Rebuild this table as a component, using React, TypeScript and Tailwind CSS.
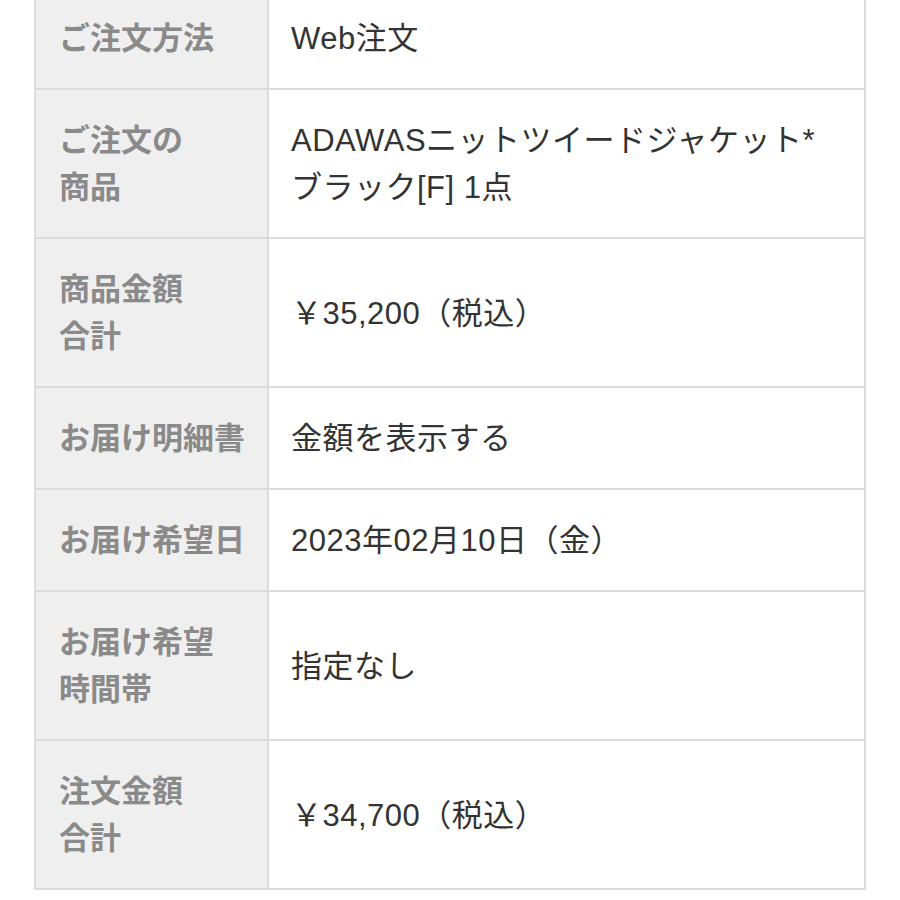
const rows: { label: React.ReactNode; value: React.ReactNode }[] = [
  { label: "ご注文方法", value: "Web注文" },
  {
    label: (
      <>
        ご注文の
        <br />
        商品
      </>
    ),
    value: (
      <>
        ADAWASニットツイードジャケット*
        <br />
        ブラック[F] 1点
      </>
    ),
  },
  {
    label: (
      <>
        商品金額
        <br />
        合計
      </>
    ),
    value: "￥35,200（税込）",
  },
  { label: "お届け明細書", value: "金額を表示する" },
  { label: "お届け希望日", value: "2023年02月10日（金）" },
  {
    label: (
      <>
        お届け希望
        <br />
        時間帯
      </>
    ),
    value: "指定なし",
  },
  {
    label: (
      <>
        注文金額
        <br />
        合計
      </>
    ),
    value: "￥34,700（税込）",
  },
];

export default function App() {
  return (
    <div className="w-[900px] h-[900px] overflow-hidden bg-white font-['Liberation_Sans','Noto_Sans_CJK_JP',sans-serif]">
      <div className="ml-[34px] mt-[-14px] w-[832px] border-2 border-[#dcdcdc]">
        {rows.map((row, i) => (
          <div
            key={i}
            className={`flex ${i < rows.length - 1 ? "border-b-2 border-[#dcdcdc]" : ""}`}
          >
            <div className="w-[233px] shrink-0 border-r-2 border-[#dcdcdc] bg-[#efefef] pl-[23px] pr-1 pt-[27px] pb-[26px] text-[31px] font-bold leading-[47px] text-[#8a8a8a]">
              {row.label}
            </div>
            <div className="flex flex-1 items-center pl-[22px] pr-2 pt-[27px] pb-[26px] text-[31px] leading-[47px] tracking-[0.5px] text-[#333333]">
              <div>{row.value}</div>
            </div>
          </div>
        ))}
      </div>
    </div>
  );
}
